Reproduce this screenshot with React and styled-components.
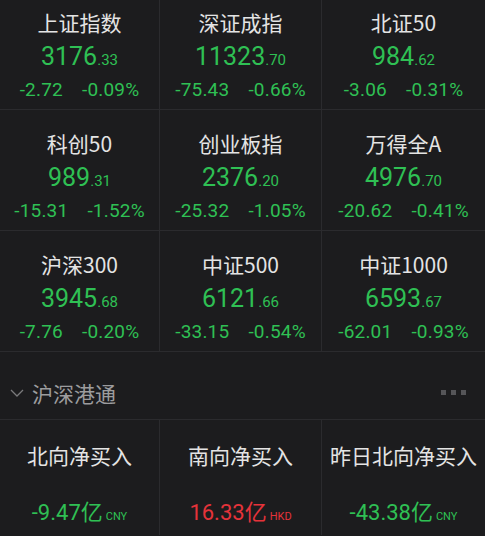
import React from 'react';
import styled, { createGlobalStyle } from 'styled-components';

const GlobalStyle = createGlobalStyle`
  html, body {
    margin: 0;
    padding: 0;
    background: #1c1c1e;
    overflow: hidden;
  }
  body {
    font-family: Roboto, "Noto Sans CJK SC", sans-serif;
  }
`

const GREEN = '#2fc054';
const RED = '#e5333a';
const LINE = '#2b2b2e';

const indices = [
  { name: '上证指数', int: '3176', dec: '33', chg: '-2.72', pct: '-0.09%' },
  { name: '深证成指', int: '11323', dec: '70', chg: '-75.43', pct: '-0.66%' },
  { name: '北证50', int: '984', dec: '62', chg: '-3.06', pct: '-0.31%' },
  { name: '科创50', int: '989', dec: '31', chg: '-15.31', pct: '-1.52%' },
  { name: '创业板指', int: '2376', dec: '20', chg: '-25.32', pct: '-1.05%' },
  { name: '万得全A', int: '4976', dec: '70', chg: '-20.62', pct: '-0.41%' },
  { name: '沪深300', int: '3945', dec: '68', chg: '-7.76', pct: '-0.20%' },
  { name: '中证500', int: '6121', dec: '66', chg: '-33.15', pct: '-0.54%' },
  { name: '中证1000', int: '6593', dec: '67', chg: '-62.01', pct: '-0.93%' },
];

const flows = [
  { name: '北向净买入', value: '-9.47', unit: 'CNY', up: false },
  { name: '南向净买入', value: '16.33', unit: 'HKD', up: true },
  { name: '昨日北向净买入', value: '-43.38', unit: 'CNY', up: false },
];

const Page = styled.div`
  width: 485px;
  height: 536px;
  overflow: hidden;
  background: #1c1c1e;
`
const IndexGrid = styled.div`
  display: grid;
  grid-template-columns: 160px 162px 1fr;
  margin-top: -11px;
`
const IndexCell = styled.div`
  height: 121px;
  box-sizing: border-box;
  border-bottom: 1px solid ${LINE};
  border-right: ${(props) => (props.last ? 'none' : `1px solid ${LINE}`)};
  display: flex;
  flex-direction: column;
  align-items: center;
  padding-top: 21px;
`
const Title = styled.div`
  font-family: "Noto Sans CJK SC", sans-serif;
  font-size: 21px;
  line-height: 24px;
  color: #e4e4e4;
  white-space: nowrap;
`
const Price = styled.div`
  margin-top: 9px;
  font-size: 25px;
  line-height: 28px;
  color: ${GREEN};
`
const PriceDec = styled.span`
  font-size: 15px;
`
const Change = styled.div`
  margin-top: 5px;
  display: flex;
  gap: 19px;
  font-size: 19px;
  line-height: 22px;
  letter-spacing: 0.2px;
  color: ${GREEN};
`

const SectionHeader = styled.div`
  height: 68px;
  box-sizing: border-box;
  padding: 14px 19px 0 10px;
  border-bottom: 1px solid ${LINE};
  display: flex;
  align-items: center;
  gap: 8px;
`
const SectionTitle = styled.div`
  flex: 1;
  font-family: "Noto Sans CJK SC", sans-serif;
  font-size: 21px;
  color: #9c9c9e;
`
const Dots = styled.div`
  display: flex;
  gap: 5px;
  span {
    width: 5px;
    height: 5px;
    background: #555558;
  }
`

const FlowRow = styled.div`
  display: grid;
  grid-template-columns: 160px 162px 1fr;
`
const FlowCell = styled.div`
  height: 115px;
  box-sizing: border-box;
  border-right: ${(props) => (props.last ? 'none' : `1px solid ${LINE}`)};
  display: flex;
  flex-direction: column;
  align-items: center;
  padding-top: 23px;
`
const FlowValue = styled.div`
  margin-top: 30px;
  display: flex;
  align-items: baseline;
  font-size: 22px;
  line-height: 26px;
  color: ${(props) => (props.up ? RED : GREEN)};
`
const Yi = styled.span`
  font-family: "Noto Sans CJK SC", sans-serif;
  font-size: 22px;
`
const Unit = styled.span`
  margin-left: 3px;
  font-size: 11px;
`

const Chevron = () => (
  <svg width="14" height="10" viewBox="0 0 14 10">
    <path d="M1 2 L7 8 L13 2" fill="none" stroke="#7a7a7c" strokeWidth="1.3" />
  </svg>
);

export default function App() {
  return (
    <Page>
      <GlobalStyle />
      <IndexGrid>
        {indices.map((item, i) => (
          <IndexCell key={item.name} last={i % 3 === 2}>
            <Title>{item.name}</Title>
            <Price>
              {item.int}
              <PriceDec>.{item.dec}</PriceDec>
            </Price>
            <Change>
              <span>{item.chg}</span>
              <span>{item.pct}</span>
            </Change>
          </IndexCell>
        ))}
      </IndexGrid>
      <SectionHeader>
        <Chevron />
        <SectionTitle>沪深港通</SectionTitle>
        <Dots>
          <span />
          <span />
          <span />
        </Dots>
      </SectionHeader>
      <FlowRow>
        {flows.map((item, i) => (
          <FlowCell key={item.name} last={i === 2}>
            <Title>{item.name}</Title>
            <FlowValue up={item.up}>
              {item.value}
              <Yi>亿</Yi>
              <Unit>{item.unit}</Unit>
            </FlowValue>
          </FlowCell>
        ))}
      </FlowRow>
    </Page>
  );
}
